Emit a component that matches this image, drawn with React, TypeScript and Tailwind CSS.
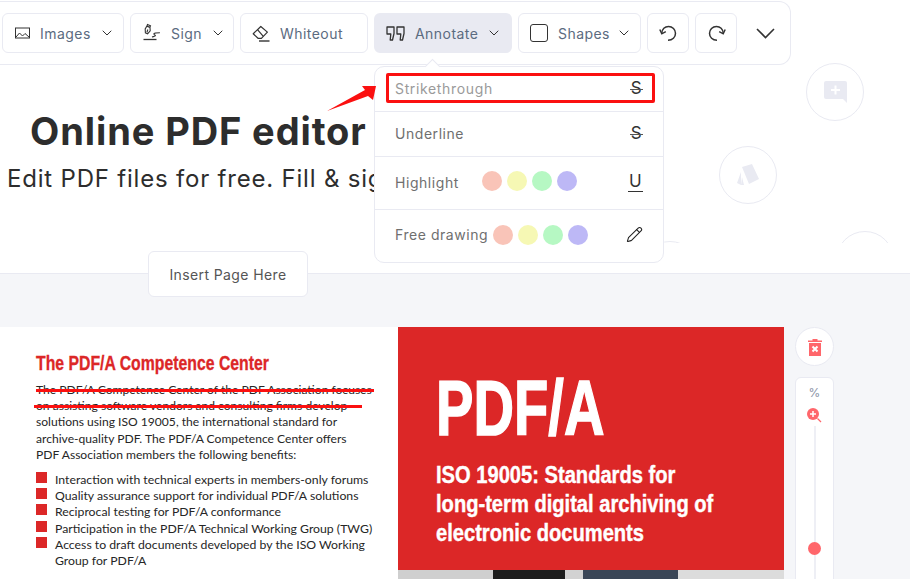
import { ChevronDown, Pencil } from "lucide-react";

const ui = "font-['Inter','Noto_Sans',sans-serif]";
const pdfHead = "font-['Liberation_Sans',sans-serif]";
const label = "text-[14px] tracking-[0.45px] text-[#5b6b80]";
const dots = ["bg-[#f9c4b8]", "bg-[#f6f8b4]", "bg-[#b6f8c3]", "bg-[#bdb8f6]"];

function ImageIcon() {
  return (
    <svg width="15" height="12" viewBox="0 0 15 12" fill="none" stroke="#333" strokeWidth="1">
      <rect x="0.500" y="1" width="14" height="10" />
      <path d="M1 10l3.500-4 3 3 2.500-2.500 4 3.500" />
    </svg>
  );
}

function SignIcon() {
  return (
    <svg width="20" height="20" viewBox="0 0 20 20" fill="none" stroke="#333" strokeWidth="1.100">
      <path d="M5.500 1.500l3 1.200-.6 1.600-3-1.200zM4.800 3.200l3.200 1.200.2 3.400-2.600 3-2.200-.9-.2-3.900z" />
      <path d="M5.800 6.500l-.9 3" />
      <path d="M1.500 16.500h13" strokeWidth="1.300" />
      <path d="M10 14c1-.4 3-.5 3.500-1.200.4-.8-2-1-1.600-2 .2-1 3-1 6-1" />
    </svg>
  );
}

function EraserIcon() {
  return (
    <svg width="19" height="19" viewBox="0 0 19 19" fill="none" stroke="#333" strokeWidth="1.200">
      <path d="M1.200 9.800l7.600-7.300 6.600 5.600-6 6.200H6z" strokeLinejoin="round" />
      <path d="M5.500 5.600l5.600 6.600" />
      <path d="M7 17h10.500" strokeWidth="1.400" />
    </svg>
  );
}

function QuotesIcon() {
  return (
    <svg width="19" height="15" viewBox="0 0 19 15" fill="none" stroke="#333" strokeWidth="1.300" strokeLinejoin="round">
      <path d="M1 1h7v6.500L6.500 14H4.200l.6-6H1z" />
      <path d="M11 1h7v6.500L16.500 14h-2.300l.6-6H11z" />
    </svg>
  );
}

function ArcArrow({ flip }: { flip?: boolean }) {
  return (
    <svg className={flip ? "-scale-x-100" : ""} width="19" height="19" viewBox="0 0 19 19" fill="none" stroke="#333" strokeWidth="1.500">
      <path d="M2.800 9.500C2.800 5 6 2.500 9.500 2.500c4 0 7 3 7 6.800 0 4-3 7-7.500 7" />
      <path d="M.8 5.500l2 4.300 4-2.200" />
    </svg>
  );
}

function StrikeS() {
  return (
    <span className="relative w-[13px] text-center text-[17px] leading-[18px] text-[#333]">
      S<span className="absolute left-0 right-0 top-[10px] h-px bg-[#555]" />
    </span>
  );
}

function Dots({ className }: { className?: string }) {
  return (
    <div className={`flex gap-[5px] ${className}`}>
      {dots.map((c) => (
        <span key={c} className={`h-[20px] w-[20px] rounded-full ${c}`} />
      ))}
    </div>
  );
}

function AnnotateMenu() {
  return (
    <div className={`absolute left-[374px] top-[66px] z-20 w-[290px] rounded-[10px] border border-[#e9eaf2] bg-white text-[14px] tracking-[0.55px] text-[#6f6f6f] ${ui}`}>
      <div className="absolute left-[52px] top-[-6px] h-[11px] w-[11px] rotate-45 border-l border-t border-[#e9eaf2] bg-white" />
      <div className="flex h-[45px] items-center justify-between border-b border-[#e9eaf2] px-[20px] pb-[2px]">
        <span className="tracking-[0.65px] text-[#9a9a9a]">Strikethrough</span>
        <StrikeS />
      </div>
      <div className="flex h-[45px] items-center justify-between border-b border-[#e9eaf2] px-[20px] pb-[2px]">
        <span>Underline</span>
        <StrikeS />
      </div>
      <div className="flex h-[53px] items-center border-b border-[#e9eaf2] px-[20px] pb-[2px]">
        <span className="w-[87px]">Highlight</span>
        <Dots className="mt-[-2px]" />
        <span className="ml-auto w-[15px] border-b border-[#333] text-center text-[17px] leading-[19px] text-[#333]">U</span>
      </div>
      <div className="flex h-[52px] items-center px-[20px] pb-[3px]">
        <span className="w-[98px] whitespace-nowrap">Free drawing</span>
        <Dots />
        <Pencil size={17} strokeWidth={1.500} className="ml-auto text-[#222]" />
      </div>
      <div className="absolute left-[11px] top-[6px] h-[30px] w-[269px] rounded-[2px] border-[3px] border-[#fb1010]" />
    </div>
  );
}

export default function App() {
  return (
    <div className="relative h-[579px] w-[910px] overflow-hidden bg-white">
      {/* toolbar */}
      <div className={`mt-[1px] flex h-[64px] w-[791px] items-center gap-[6px] rounded-r-[12px] border border-l-0 border-[#e9eaf2] pl-[2px] ${ui}`}>
        <div className="flex h-[40px] w-[122px] items-center rounded-[6px] border border-[#e9eaf2] pl-[12px]">
          <ImageIcon />
          <span className={`ml-[10px] ${label}`}>Images</span>
          <ChevronDown size={16} strokeWidth={1.500} className="ml-[8px] text-[#333]" />
        </div>
        <div className="flex h-[40px] w-[104px] items-center rounded-[6px] border border-[#e9eaf2] pl-[11px]">
          <SignIcon />
          <span className={`ml-[9px] ${label}`}>Sign</span>
          <ChevronDown size={16} strokeWidth={1.500} className="ml-[8px] text-[#333]" />
        </div>
        <div className="flex h-[40px] w-[128px] items-center rounded-[6px] border border-[#e9eaf2] pl-[11px]">
          <EraserIcon />
          <span className={`ml-[9px] ${label}`}>Whiteout</span>
        </div>
        <div className="flex h-[40px] w-[138px] items-center rounded-[6px] bg-[#e9eaf2] pl-[12px]">
          <QuotesIcon />
          <span className={`ml-[10px] ${label}`}>Annotate</span>
          <ChevronDown size={16} strokeWidth={1.500} className="ml-[8px] text-[#333]" />
        </div>
        <div className="flex h-[40px] w-[123px] items-center rounded-[6px] border border-[#e9eaf2] pl-[11px]">
          <span className="h-[18px] w-[18px] rounded-[3px] border-[1.5px] border-[#333]" />
          <span className={`ml-[10px] ${label}`}>Shapes</span>
          <ChevronDown size={16} strokeWidth={1.500} className="ml-[6px] text-[#333]" />
        </div>
        <div className="flex h-[40px] w-[42px] items-center justify-center rounded-[6px] border border-[#e9eaf2]">
          <ArcArrow />
        </div>
        <div className="flex h-[40px] w-[42px] items-center justify-center rounded-[6px] border border-[#e9eaf2]">
          <ArcArrow flip />
        </div>
        <svg className="ml-[13px]" width="19" height="11" viewBox="0 0 19 11" fill="none" stroke="#333" strokeWidth="1.600">
          <path d="M1 1l8.500 8.500L18 1" />
        </svg>
      </div>

      {/* hero */}
      <div className={`relative h-[209px] border-b border-[#e9eaf2] pt-[44px] ${ui}`}>
        <h1 className="ml-[30px] whitespace-nowrap text-[38px] font-bold leading-[44px] tracking-[0.9px] text-[#2d2d2d]">Online PDF editor</h1>
        <p className="ml-[7px] mt-[10px] whitespace-nowrap text-[24px] leading-[32px] tracking-[0.8px] text-[#2d2d2d]">Edit PDF files for free. Fill &amp; sign PDF</p>

        <div className="absolute inset-x-0 top-[-10px] h-[188px] overflow-hidden">
          <div className="absolute left-[806px] top-[8px] flex h-[58px] w-[58px] items-center justify-center rounded-full border-[1.5px] border-[#e9eaf2] bg-white">
            <svg width="23" height="22" viewBox="0 0 23 22">
              <path d="M2 0h19a2 2 0 0 1 2 2v20l-4-4H2a2 2 0 0 1-2-2V2a2 2 0 0 1 2-2z" fill="#e9eaf2" />
              <path d="M11.500 4.500v9M7 9h9" stroke="#fff" strokeWidth="2" />
            </svg>
          </div>
          <div className="absolute left-[719px] top-[91px] flex h-[58px] w-[58px] items-center justify-center rounded-full border-[1.5px] border-[#e9eaf2] bg-white">
            <svg width="24" height="24" viewBox="0 0 24 24" fill="#e9eaf2">
              <path d="M6 4l10-3 7 15-10 5z" />
              <path d="M5 9L1 20l4 2zM6 14l-1 8h3z" />
            </svg>
          </div>
          <div className="absolute left-[836px] top-[176px] h-[58px] w-[58px] rounded-full border-[1.5px] border-[#e9eaf2]" />
          <div className="absolute left-[641px] top-[186px] h-[58px] w-[58px] rounded-full border-[1.5px] border-[#e9eaf2]" />
        </div>
      </div>

      <div className={`absolute left-[148px] top-[251px] z-10 flex h-[46px] w-[160px] items-center justify-center rounded-[6px] border border-[#e9eaf2] bg-white text-[14px] tracking-[0.4px] text-[#555] ${ui}`}>
        Insert Page Here
      </div>

      {/* document area */}
      <div className="flex h-[305px] bg-[#f5f6f9] pt-[53px]">
        <div className="w-[398px] bg-white pl-[36px] pt-[25px] font-['Lato',sans-serif] text-[12.1px] leading-[16.2px] text-[#262626]">
          <h2 className={`mb-[8px] origin-left scale-x-[0.79] whitespace-nowrap text-[20px] font-bold leading-[22px] text-[#dc2727] [-webkit-text-stroke:0.3px_#dc2727] ${pdfHead}`}>The PDF/A Competence Center</h2>
          <p className="whitespace-nowrap">The PDF/A Competence Center of the PDF Association focuses</p>
          <p className="whitespace-nowrap">on assisting software vendors and consulting firms develop</p>
          <p className="whitespace-nowrap">solutions using ISO 19005, the international standard for</p>
          <p className="whitespace-nowrap">archive-quality PDF. The PDF/A Competence Center offers</p>
          <p className="whitespace-nowrap">PDF Association members the following benefits:</p>
          <ul className="mt-[9px] text-[12.25px]">
            {[
              "Interaction with technical experts in members-only forums",
              "Quality assurance support for individual PDF/A solutions",
              "Reciprocal testing for PDF/A conformance",
              "Participation in the PDF/A Technical Working Group (TWG)",
              "Access to draft documents developed by the ISO Working",
            ].map((t) => (
              <li key={t} className="flex items-start whitespace-nowrap">
                <span className="mr-[8px] h-[11px] w-[11px] shrink-0 bg-[#dc2727]" />
                {t}
              </li>
            ))}
            <li className="pl-[19px]">Group for PDF/A</li>
          </ul>
        </div>

        <div className="flex w-[386px] flex-col">
          <div className="h-[243px] bg-[#dc2727] pl-[38px] pt-[43px] text-white">
            <div className={`origin-left scale-x-[0.72] text-[78px] font-bold leading-[76px] [-webkit-text-stroke:1.5px_white] ${pdfHead}`}>PDF/A</div>
            <div className={`mt-[15px] origin-left scale-x-[0.875] whitespace-nowrap text-[23px] font-bold leading-[29px] [-webkit-text-stroke:0.4px_white] ${pdfHead}`}>
              ISO 19005: Standards for
              <br />
              long-term digital archiving of
              <br />
              electronic documents
            </div>
          </div>
          <div className="flex h-[9px]">
            <span className="w-[95px] bg-[#cfcfcf]" />
            <span className="w-[72px] bg-[#1c1c1c]" />
            <span className="w-[18px] bg-[#d2d2d2]" />
            <span className="w-[95px] bg-[#3a4657]" />
            <span className="flex-1 bg-[#dcdcdc]" />
          </div>
        </div>

        <div className={`ml-[11px] flex w-[39px] flex-col items-center ${ui}`}>
          <div className="flex h-[39px] w-[39px] shrink-0 items-center justify-center rounded-full border border-[#e9eaf2] bg-white">
            <svg width="16" height="18" viewBox="0 0 16 18">
              <path d="M5.500 1h5v1.500H15V4H1V2.500h4.500zM2 5h12v13H2z" fill="#ff666b" />
              <path d="M5.500 8.500l5 5M10.500 8.500l-5 5" stroke="#fff" strokeWidth="2" />
            </svg>
          </div>
          <div className="mt-[11px] flex w-[39px] shrink-0 flex-col items-center rounded-[6px] border border-[#e9eaf2] bg-white pt-[8px]">
            <span className="text-[12px] leading-[14px] text-[#8a94a6]">%</span>
            <svg className="mt-[8px]" width="15" height="15" viewBox="0 0 15 15">
              <circle cx="6" cy="6" r="6" fill="#ff666b" />
              <path d="M6 3v6M3 6h6" stroke="#fff" strokeWidth="1.500" />
              <path d="M10.500 10.500l3.500 3.500" stroke="#ff666b" strokeWidth="1.200" />
            </svg>
            <div className="relative mt-[3px] h-[160px] w-[2px] bg-[#eeeff5]">
              <span className="absolute left-[-5.500px] top-[116px] h-[13px] w-[13px] rounded-full bg-[#ff666b]" />
            </div>
          </div>
        </div>
      </div>

      {/* strikethrough marks over the text */}
      <span className="absolute left-[36px] top-[389px] h-[3px] w-[338px] bg-[#fb1010]" />
      <span className="absolute left-[34px] top-[405px] h-[3px] w-[328px] bg-[#fb1010]" />

      <AnnotateMenu />

      {/* callout arrow */}
      <svg className="absolute left-[325px] top-[82px] z-30" width="52" height="32" viewBox="0 0 52 32">
        <path d="M2 29L40 8 37 4H51L48 18 43 14Z" fill="#fb1010" />
      </svg>
    </div>
  );
}
